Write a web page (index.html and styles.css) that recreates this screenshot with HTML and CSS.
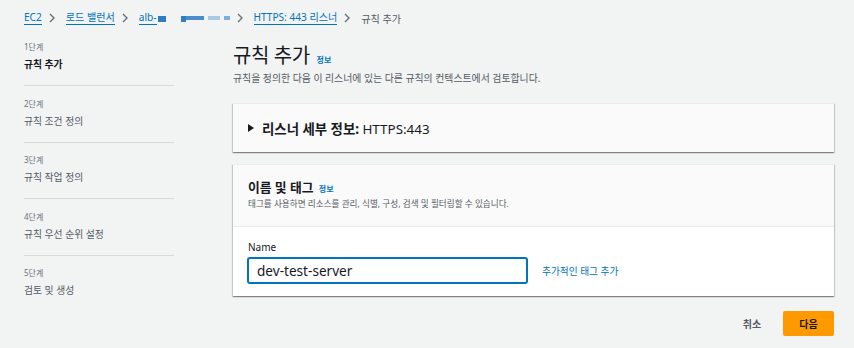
FILE: index.html
```html
<!DOCTYPE html>
<html lang="ko">
<head>
    <meta charset="UTF-8">
    <meta name="viewport" content="width=device-width, initial-scale=1.0">
    <title>규칙 추가</title>
    <link rel="stylesheet" href="styles.css">
</head>
<body>
    <nav class="breadcrumbs">
        <a href="#" class="crumb">EC2</a>
        <svg class="chev" width="10" height="10" viewBox="0 0 10 10"><path d="M3 1l4 4-4 4" /></svg>
        <a href="#" class="crumb">로드 밸런서</a>
        <svg class="chev" width="10" height="10" viewBox="0 0 10 10"><path d="M3 1l4 4-4 4" /></svg>
        <span class="crumb-redacted">
            <a href="#" class="crumb">alb-</a>
            <span class="blur b1"></span>
            <span class="blur b2"></span>
            <span class="blur b3"></span>
            <span class="blur b4"></span>
            <span class="blur b5"></span>
        </span>
        <svg class="chev" width="10" height="10" viewBox="0 0 10 10"><path d="M3 1l4 4-4 4" /></svg>
        <a href="#" class="crumb">HTTPS: 443 리스너</a>
        <svg class="chev" width="10" height="10" viewBox="0 0 10 10"><path d="M3 1l4 4-4 4" /></svg>
        <span class="crumb-current">규칙 추가</span>
    </nav>

    <div class="layout">
        <ul class="steps">
            <li class="step active">
                <div class="step-num">1단계</div>
                <div class="step-title">규칙 추가</div>
            </li>
            <li class="step">
                <div class="step-num">2단계</div>
                <div class="step-title">규칙 조건 정의</div>
            </li>
            <li class="step">
                <div class="step-num">3단계</div>
                <div class="step-title">규칙 작업 정의</div>
            </li>
            <li class="step">
                <div class="step-num">4단계</div>
                <div class="step-title">규칙 우선 순위 설정</div>
            </li>
            <li class="step last">
                <div class="step-num">5단계</div>
                <div class="step-title">검토 및 생성</div>
            </li>
        </ul>

        <main class="content">
            <h1 class="page-title">규칙 추가 <a href="#" class="info">정보</a></h1>
            <p class="page-desc">규칙을 정의한 다음 이 리스너에 있는 다른 규칙의 컨텍스트에서 검토합니다.</p>

            <section class="card">
                <div class="card-header expand">
                    <svg class="caret" width="6" height="8" viewBox="0 0 6 8"><path d="M0 0l6 4-6 4z" /></svg>
                    <span class="expand-title"><b>리스너 세부 정보:</b> HTTPS:443</span>
                </div>
            </section>

            <section class="card">
                <div class="card-header">
                    <h2 class="card-title">이름 및 태그 <a href="#" class="info">정보</a></h2>
                    <p class="card-desc">태그를 사용하면 리소스를 관리, 식별, 구성, 검색 및 필터링할 수 있습니다.</p>
                </div>
                <div class="card-body">
                    <label for="name" class="field-label">Name</label>
                    <div class="field-row">
                        <input type="text" id="name" class="field-input" value="dev-test-server">
                        <a href="#" class="add-tag">추가적인 태그 추가</a>
                    </div>
                </div>
            </section>

            <div class="actions">
                <button class="btn-link">취소</button>
                <button class="btn-primary">다음</button>
            </div>
        </main>
    </div>
</body>
</html>
```

FILE: styles.css
```css
body{
    margin: 0;
    background: #f2f3f3;
    color: #16191f;
    font-family: "Noto Sans", "Noto Sans CJK KR", sans-serif;
}

a{
    color: #0073bb;
    text-decoration: none;
}

/* breadcrumbs */
.breadcrumbs{
    height: 36px;
    display: flex;
    align-items: center;
    padding-left: 24px;
    font-size: 10.1px;
}

.crumb{
    border-bottom: 1px solid #0073bb;
    line-height: 13px;
}

.chev{
    margin: 0 9px 0 5px;
}

.chev path{
    fill: none;
    stroke: #687078;
    stroke-width: 1.4;
}

.crumb-redacted{
    display: flex;
    align-items: center;
}

.blur{
    display: inline-block;
    height: 4px;
}

.b1{ width: 8px; height: 6px; background: #2b7cc2; margin-left: 1px; margin-top: 2px; }
.b2{ width: 5px; height: 6px; background: #2f7fc4; margin-left: 15px; margin-top: 2px; }
.b3{ width: 18px; background: #4a8fcc; }
.b4{ width: 12px; background: #a9c9e6; margin-left: 4px; }
.b5{ width: 6px; background: #7aaedb; margin-left: 4px; }

.crumb-current{
    color: #545b64;
}

/* layout */
.layout{
    display: flex;
}

.steps{
    list-style: none;
    margin: 0;
    padding: 3px 0 0 24px;
    width: 185px;
}

.step{
    width: 150px;
    padding: 9.6px 0 10px;
    border-bottom: 1px solid #d5dbdb;
}

.step:first-child{
    padding-top: 0;
}

.step.last{
    border-bottom: none;
}

.step-num{
    font-size: 8px;
    line-height: 16px;
    color: #687078;
}

.step-title{
    font-size: 9.8px;
    line-height: 20px;
    color: #545b64;
}

.active .step-title{
    font-weight: bold;
    color: #16191f;
}

.content{
    flex: 1;
    margin-left: 24px;
    margin-right: 20px;
    padding-top: 7px;
}

.page-title{
    margin: 0;
    font-size: 20px;
    line-height: 26px;
    font-weight: normal;
    letter-spacing: -0.02em;
}

.info{
    font-size: 8px;
    line-height: 1;
    font-weight: bold;
    letter-spacing: 0;
    margin-left: 2px;
}

.page-desc{
    margin: 1px 0 17px;
    font-size: 9.9px;
    line-height: 16px;
    color: #545b64;
}

/* cards */
.card{
    background: #fafafa;
    border-top: 1px solid #eaeded;
    box-shadow: 0 1px 1px 0 rgba(0,28,36,.3), 1px 1px 1px 0 rgba(0,28,36,.15), -1px 1px 1px 0 rgba(0,28,36,.15);
    margin-bottom: 12px;
}

.card-header{
    padding: 13px 15px 15px;
    border-bottom: 1px solid #eaeded;
}

.expand{
    display: flex;
    align-items: center;
    height: 48px;
    box-sizing: border-box;
    padding: 0 15px;
    border-bottom: none;
}

.caret path{
    fill: #16191f;
}

.expand-title{
    margin-left: 8px;
    font-size: 13.4px;
}

.card-title{
    margin: 0;
    font-size: 12.8px;
    line-height: 18px;
}

.card-desc{
    margin: 1px 0 0;
    font-size: 8.6px;
    line-height: 14px;
    color: #545b64;
}

.card-body{
    background: #fff;
    padding: 13px 15px 13px;
}

.field-label{
    display: block;
    font-size: 10px;
    line-height: 14px;
}

.field-row{
    display: flex;
    align-items: center;
    margin-top: 4px;
}

.field-input{
    width: 279px;
    height: 25px;
    box-sizing: border-box;
    border: 1px solid #0073bb;
    box-shadow: 0 0 0 1px #0073bb;
    border-radius: 2px;
    padding: 0 8px;
    font-family: "Noto Sans", sans-serif;
    font-size: 13.6px;
    color: #16191f;
    outline: none;
}

.add-tag{
    margin-left: 15px;
    font-size: 9.7px;
}

/* buttons */
.actions{
    display: flex;
    justify-content: flex-end;
    align-items: center;
    margin-top: 15px;
    gap: 11px;
}

.btn-link,
.btn-primary{
    font-family: "Noto Sans", "Noto Sans CJK KR", sans-serif;
    font-size: 10px;
    font-weight: bold;
    height: 25px;
    border: none;
    border-radius: 2px;
    color: #16191f;
    cursor: pointer;
}

.btn-link{
    background: none;
    color: #545b64;
    width: 40px;
    padding: 0;
}

.btn-primary{
    background: #ff9900;
    width: 51px;
}
```
